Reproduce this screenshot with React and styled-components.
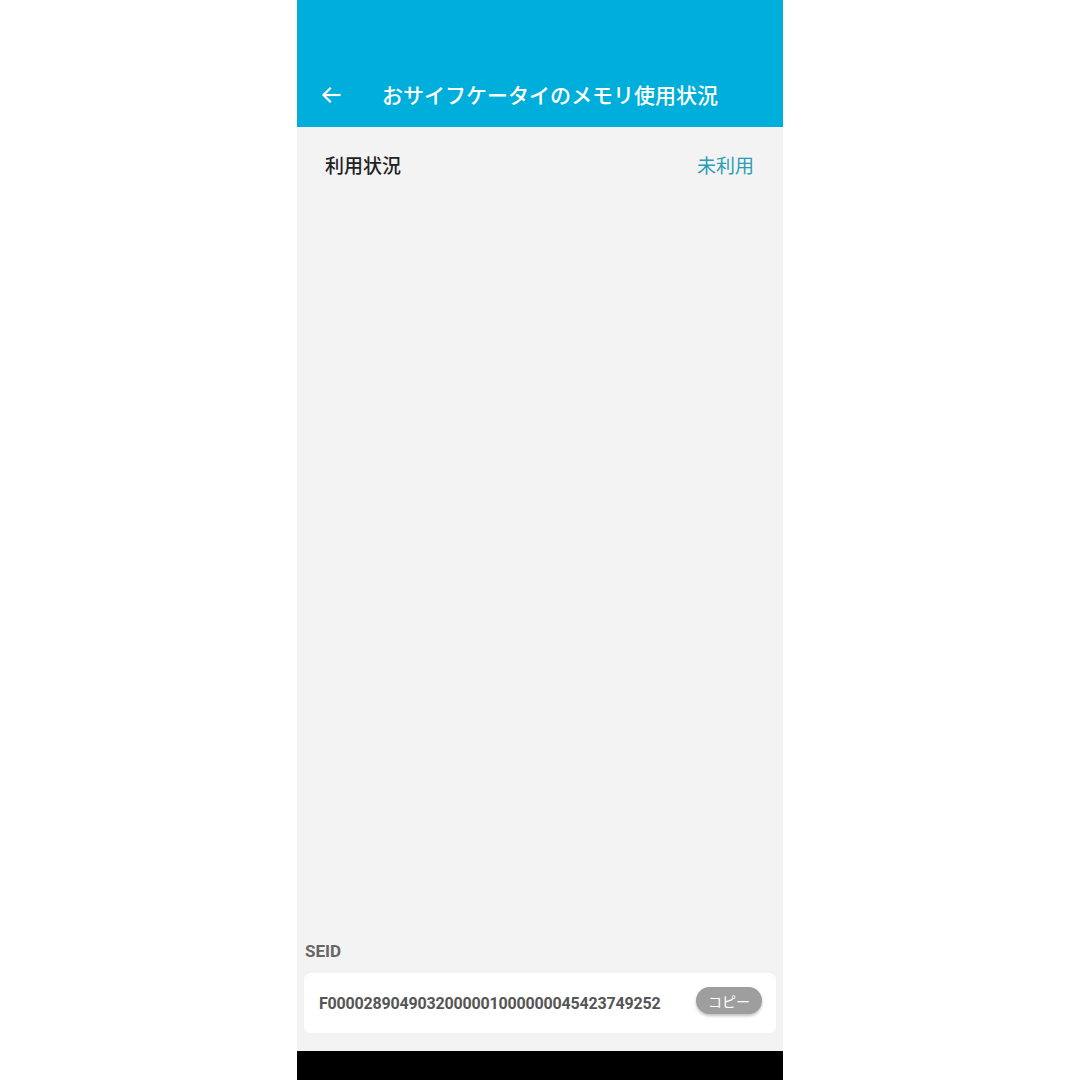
import React from 'react'
import styled, { createGlobalStyle } from 'styled-components'

const GlobalStyle = createGlobalStyle`
  html, body {
    margin: 0;
    padding: 0;
    background: #fff;
  }
  body {
    font-family: Roboto, "Noto Sans CJK JP", sans-serif;
  }
`

const Page = styled.div`
  width: 100%;
  display: flex;
  justify-content: center;
  background: #fff;
`

const Phone = styled.div`
  width: 486px;
  height: 1080px;
  display: flex;
  flex-direction: column;
`

const Header = styled.header`
  background: #00aedb;
  padding-top: 62px;
`

const Toolbar = styled.div`
  height: 65px;
  display: flex;
  align-items: center;
  padding-left: 22px;
`

const BackButton = styled.button`
  border: none;
  background: none;
  padding: 0;
  width: 24px;
  height: 24px;
  display: flex;
  align-items: center;
  justify-content: center;
  color: #fff;
`

const Title = styled.h1`
  margin: 0 0 0 39px;
  font-family: "Noto Sans CJK JP", sans-serif;
  font-size: 21px;
  font-weight: 500;
  color: #fff;
  line-height: 24px;
  padding-bottom: 2px;
`

const Content = styled.main`
  flex: 1;
  background: #f3f3f3;
  display: flex;
  flex-direction: column;
`

const StatusRow = styled.div`
  height: 74px;
  padding: 0 29px 0 28px;
  display: flex;
  align-items: center;
  justify-content: space-between;
  font-family: "Noto Sans CJK JP", sans-serif;
  font-size: 19px;
  font-weight: 500;
`

const Label = styled.span`
  color: #222;
`

const Value = styled.span`
  color: ${(p) => p.color || '#222'};
  font-weight: 400;
`

const Spacer = styled.div`
  flex: 1;
`

const SeidSection = styled.section`
  padding: 0 7px 18px;
`

const SectionLabel = styled.div`
  font-family: Roboto, sans-serif;
  font-size: 17px;
  font-weight: 700;
  color: #666;
  line-height: 20px;
  padding-left: 1px;
  margin-bottom: 12px;
`

const Card = styled.div`
  height: 60px;
  background: #fff;
  border-radius: 7px;
  display: flex;
  align-items: center;
  justify-content: space-between;
  padding: 0 14px 0 15px;
`

const Seid = styled.span`
  font-family: Roboto, sans-serif;
  font-size: 16px;
  font-weight: 700;
  color: #555;
  letter-spacing: -0.18px;
`

const CopyButton = styled.button`
  width: 66px;
  height: 27px;
  margin-bottom: 5px;
  border: none;
  border-radius: 14px;
  background: #9e9e9e;
  color: #fff;
  font-family: "Noto Sans CJK JP", sans-serif;
  font-size: 14px;
  padding: 0;
  box-shadow: 0 2px 3px rgba(0, 0, 0, 0.25);
`

const NavBar = styled.div`
  height: 29px;
  background: #000;
`

const ArrowBack = () => (
  <svg width="20" height="18" viewBox="0 0 20 18" fill="none" stroke="currentColor" strokeWidth="2.2" strokeLinecap="square">
    <path d="M18.5 9H3" />
    <path d="M9 2.5L2.5 9L9 15.5" />
  </svg>
)

const App = () => {
  return (
    <Page>
      <GlobalStyle />
      <Phone>
        <Header>
          <Toolbar>
            <BackButton aria-label="戻る">
              <ArrowBack />
            </BackButton>
            <Title>おサイフケータイのメモリ使用状況</Title>
          </Toolbar>
        </Header>
        <Content>
          <StatusRow>
            <Label>利用状況</Label>
            <Value color="#2a9cb6">未利用</Value>
          </StatusRow>
          <Spacer />
          <SeidSection>
            <SectionLabel>SEID</SectionLabel>
            <Card>
              <Seid>F0000289049032000001000000045423749252</Seid>
              <CopyButton>コピー</CopyButton>
            </Card>
          </SeidSection>
        </Content>
        <NavBar />
      </Phone>
    </Page>
  )
}

export default App
